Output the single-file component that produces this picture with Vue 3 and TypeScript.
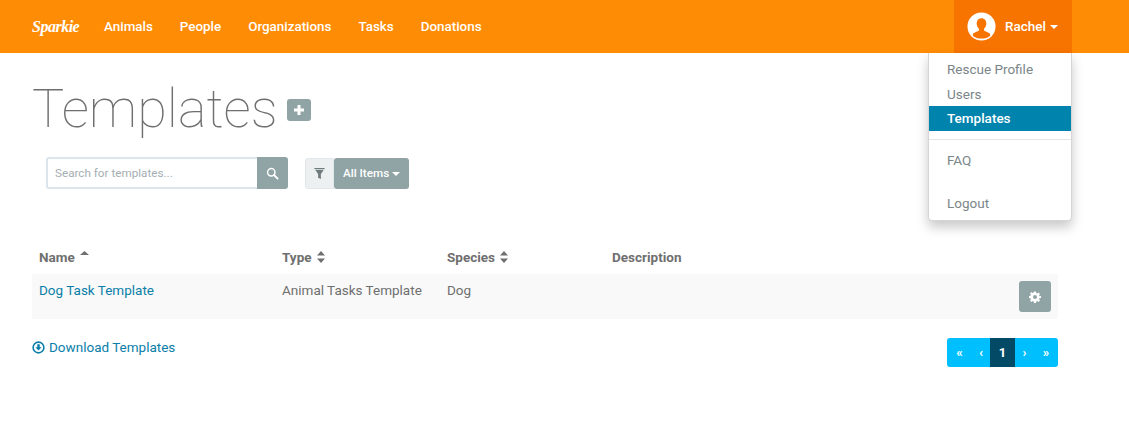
<script setup lang="ts">
const links: string[] = ['Animals', 'People', 'Organizations', 'Tasks', 'Donations']
</script>

<template>
  <div class="page">
    <header class="nav">
      <span class="logo">Sparkie</span>
      <a v-for="l in links" :key="l" class="nav-link">{{ l }}</a>
      <div class="user">
        <svg class="avatar" viewBox="0 0 30 30" width="29" height="29">
          <circle cx="15" cy="15" r="14.5" fill="#fff" />
          <path d="M15 6.500c-3 0-5 2.300-5 5.400 0 2.200 1 4.200 2.400 5.300v1.900c-.6.800-4.500 1.600-6.300 3.400v2.300C8.200 26.500 11.500 27.500 15 27.500s6.800-1 8.900-2.700v-2.300c-1.800-1.800-5.700-2.600-6.300-3.400v-1.900c1.400-1.100 2.400-3.100 2.400-5.300 0-3.100-2-5.400-5-5.400z" fill="#f77400" />
        </svg>
        <span class="user-name">Rachel</span>
        <span class="caret"></span>
      </div>
      <ul class="menu">
        <li>Rescue Profile</li>
        <li class="users">Users</li>
        <li class="active">Templates</li>
        <li class="divider"></li>
        <li>FAQ</li>
        <li class="logout">Logout</li>
      </ul>
    </header>

    <main class="content">
      <div class="title-row">
        <h1>Templates</h1>
        <span class="add">
          <svg viewBox="0 0 12 12" width="12" height="12"><path d="M4.500 1h3v3.500H11v3H7.500V11h-3V7.500H1v-3h3.500z" fill="#fff" /></svg>
        </span>
      </div>

      <div class="tools">
        <div class="search">
          <input class="search-input" placeholder="Search for templates..." />
          <button class="search-btn">
            <svg viewBox="0 0 14 14" width="13" height="13"><circle cx="5.700" cy="5.700" r="4" fill="none" stroke="#fff" stroke-width="1.600" /><path d="M8.600 8.600l3.900 3.900" stroke="#fff" stroke-width="2" stroke-linecap="round" /></svg>
          </button>
        </div>
        <div class="filter">
          <span class="filter-icon">
            <svg viewBox="0 0 12 14" width="11" height="13"><path d="M0.500 1h11v1.300H.5z M1.500 3.300h9L7.500 7.500V13l-3-1.500v-4z" fill="#6f7a7c" /></svg>
          </span>
          <button class="filter-btn">All Items <span class="caret small"></span></button>
        </div>
      </div>

      <div class="table">
        <div class="row head">
          <div class="c1">Name <svg class="sort up" viewBox="0 0 9 12" width="9" height="12"><path d="M4.500 1l4.500 4H0z" /></svg></div>
          <div class="c2">Type <svg class="sort" viewBox="0 0 8 12" width="8" height="12"><path d="M4 0l4 4.500H0zM4 12L0 7.500h8z" /></svg></div>
          <div class="c3">Species <svg class="sort" viewBox="0 0 8 12" width="8" height="12"><path d="M4 0l4 4.500H0zM4 12L0 7.500h8z" /></svg></div>
          <div class="c4">Description</div>
        </div>
        <div class="row body">
          <div class="c1"><a class="link">Dog Task Template</a></div>
          <div class="c2">Animal Tasks Template</div>
          <div class="c3">Dog</div>
          <div class="c4"></div>
          <button class="gear">
            <svg viewBox="0 0 24 24" width="12" height="12"><path fill="#fff" fill-rule="evenodd" d="M10 1h4l.6 3.200 1.900.8 2.700-1.800 2.800 2.800-1.800 2.700.8 1.900L24 10v4l-3 .6-.8 1.900 1.800 2.700-2.800 2.800-2.700-1.800-1.900.8L14 24h-4l-.6-3.200-1.900-.8-2.700 1.800-2.800-2.800 1.800-2.700-.8-1.900L0 14v-4l3-.6.8-1.900L2 4.800 4.800 2l2.700 1.800 1.900-.8zM12 8a4 4 0 1 0 0 8 4 4 0 0 0 0-8z" /></svg>
          </button>
        </div>
      </div>

      <div class="foot">
        <a class="link download">
          <svg viewBox="0 0 14 14" width="13" height="13"><circle cx="7" cy="7" r="5.800" fill="none" stroke="#0a7ea8" stroke-width="1.700" /><path d="M5.700 3.500h2.600v3.300h2L7 10.300 3.700 6.800h2z" fill="#0a7ea8" /></svg>
          Download Templates
        </a>
        <div class="pager">
          <span>«</span><span>‹</span><span class="current">1</span><span>›</span><span>»</span>
        </div>
      </div>
    </main>
  </div>
</template>

<style>
html, body { margin: 0; background: #fff; }
</style>

<style scoped>
.page { width: 1129px; height: 443px; overflow: hidden; font-family: Roboto, "Liberation Sans", sans-serif; font-size: 13.5px; color: #6f6f6f; }
.nav { position: relative; display: flex; align-items: center; height: 53px; background: #ff8c05; color: #fff; }
.logo { font-family: "Liberation Serif", serif; font-style: italic; font-weight: 700; font-size: 16px; letter-spacing: -0.5px; width: 46px; margin-left: 32px; margin-right: 26px; white-space: nowrap; }
.nav-link { font-weight: 500; font-size: 13.4px; margin-right: 27px; padding-bottom: 1px; }
.user { display: flex; align-items: center; height: 53px; margin-left: auto; margin-right: 57px; width: 118px; box-sizing: border-box; padding-left: 13px; background: #f77400; }
.avatar { margin-right: 9px; }
.user-name { font-weight: 500; padding-bottom: 2px; }
.caret { display: inline-block; margin-left: 4px; border-top: 4px solid #fff; border-left: 4px solid transparent; border-right: 4px solid transparent; vertical-align: middle; }
.caret.small { margin-left: 0; }
.menu { position: absolute; z-index: 2; top: 53px; left: 928px; width: 144px; height: 168px; box-sizing: border-box; margin: 0; padding: 4px 0 0; list-style: none; background: #fff; border: 1px solid #d5d5d5; border-top: 0; border-radius: 0 0 4px 4px; box-shadow: 0 6px 12px rgba(0,0,0,.22); color: #7b8688; }
.menu li { padding: 0 18px; height: 25px; line-height: 24px; }
.menu li.users { height: 24px; }
.menu li.active { background: #0083ad; color: #fff; font-weight: 500; }
.menu li.divider { height: 1px; padding: 0; margin: 8px 0 8px; background: #e5e5e5; }
.menu li.logout { margin-top: 18px; }

.content { padding: 0 71px 0 32px; }
.title-row { display: flex; align-items: center; height: 112px; }
h1 { margin: 0 9px 0 0; font-weight: 100; font-size: 54px; color: #6f6f6f; line-height: 112px; }
.add { display: flex; align-items: center; justify-content: center; width: 24px; height: 22px; margin-top: 2px; border-radius: 3px; background: #90a4a5; }
.tools { display: flex; align-items: center; padding-left: 14px; margin-top: -8px; }
.search { display: flex; width: 242px; height: 32px; }
.search-input { flex: 1; min-width: 0; box-sizing: border-box; border: 2px solid #dce4ec; border-right: 0; border-radius: 3px 0 0 3px; padding: 0 7px; font: 11.7px Roboto, sans-serif; outline: none; }
.search-input::placeholder { color: #a4aeb2; }
.search-btn { width: 31px; border: 0; padding: 0; background: #90a4a5; border-radius: 0 3px 3px 0; display: flex; align-items: center; justify-content: center; }
.filter { display: flex; height: 31px; margin-left: 17px; }
.filter-icon { display: flex; align-items: center; justify-content: center; width: 29px; background: #ecf0f1; border: 1px solid #e2e7e9; border-radius: 3px 0 0 3px; box-sizing: border-box; }
.filter-btn { width: 75px; border: 0; padding: 0; background: #90a4a5; color: #fff; font: 500 11.7px Roboto, sans-serif; border-radius: 3px; }

.table { width: 1026px; margin-top: 51px; }
.row { display: flex; }
.row > div { box-sizing: border-box; padding-left: 7px; }
.c1 { width: 243px; }
.c2 { width: 165px; }
.c3 { width: 165px; }
.c4 { flex: 1; }
.head { height: 34px; align-items: center; font-weight: 700; color: #6f6f6f; }
.sort { fill: #6f6f6f; margin-left: 2px; vertical-align: -1px; }
.sort.up { vertical-align: 0; }
.body { position: relative; height: 45px; padding-top: 8px; box-sizing: border-box; background: #f9f9f9; }
.link { color: #0a7ea8; }
.gear { position: absolute; right: 7px; top: 7px; width: 32px; height: 31px; border: 0; padding: 0; border-radius: 3px; background: #90a4a5; display: flex; align-items: center; justify-content: center; }
.foot { display: flex; justify-content: space-between; width: 1026px; margin-top: 19px; }
.download { display: flex; align-items: center; gap: 4px; height: 18px; }
.pager { display: flex; height: 29px; border-radius: 3px; overflow: hidden; background: #00bfff; color: #fff; font-size: 13px; font-weight: 700; }
.pager span { width: 17px; display: flex; align-items: center; justify-content: center; }
.pager span:nth-child(1) { width: 25px; }
.pager span:nth-child(2) { width: 18px; }
.pager span:nth-child(4) { width: 19px; }
.pager span:nth-child(5) { width: 24px; }
.pager span.current { width: 25px; background: #034a66; font-size: 13px; }
</style>
